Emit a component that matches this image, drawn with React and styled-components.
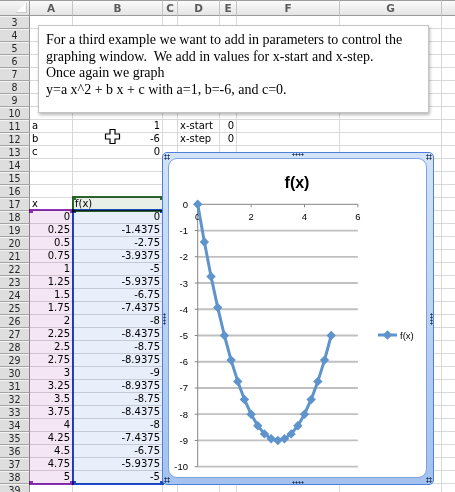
import React from 'react';
import styled, { createGlobalStyle } from 'styled-components';

const GlobalStyle = createGlobalStyle`
  html, body {
    margin: 0;
    padding: 0;
    background: #fff;
    overflow: hidden;
  }
`;

const COLS = ['A', 'B', 'C', 'D', 'E', 'F', 'G', 'H'];
const FIRST_ROW = 3;
const LAST_ROW = 39;

const fmt = (n) => String(Object.is(n, -0) ? 0 : n);
const f = (x) => x * x - 6 * x;
const xs = Array.from({ length: 21 }, (_, i) => i * 0.25);

const cells = {
  11: { A: ['a', 'left'], B: ['1', 'right'], D: ['x-start', 'left'], E: ['0', 'right'] },
  12: { A: ['b', 'left'], B: ['-6', 'right'], D: ['x-step', 'left'], E: ['0', 'right'] },
  13: { A: ['c', 'left'], B: ['0', 'right'] },
  17: { A: ['x', 'left'], B: ['f(x)', 'left'] },
};
xs.forEach((x, i) => {
  cells[18 + i] = { A: [fmt(x), 'right'], B: [fmt(f(x)), 'right'] };
});

const Window = styled.div`
  position: relative;
  width: 455px;
  height: 492px;
  overflow: hidden;
  background: #fff;
  font-family: "DejaVu Sans", Verdana, sans-serif;
`;

const Sheet = styled.div`
  position: relative;
  display: grid;
  grid-template-columns: 30px 43px 90px 15px 42px 17px 103px 102px 102px;
  grid-template-rows: 16px;
  grid-auto-rows: 13px;
`;

const Corner = styled.div`
  position: relative;
  box-sizing: border-box;
  background: linear-gradient(#f7f7f7, #e2e2e2);
  border-top: 1px solid #9c9c9c;
  border-right: 1px solid #9a9a9a;
  border-bottom: 1px solid #9a9a9a;

  &::after {
    content: '';
    position: absolute;
    right: 2px;
    bottom: 2px;
    width: 10px;
    height: 9px;
    background: linear-gradient(to bottom right, transparent 50%, #fbfbfb 50%);
    border-right: 1px solid #c9c9c9;
    border-bottom: 1px solid #c9c9c9;
  }
`;

const ColHeader = styled.div`
  box-sizing: border-box;
  background: linear-gradient(#fbfbfb, #e4e4e4);
  border-top: 1px solid #9c9c9c;
  border-right: 1px solid #c4c4c4;
  border-bottom: 1px solid #9a9a9a;
  font-size: 10.5px;
  font-weight: bold;
  line-height: 14px;
  color: #5c5c5c;
  text-align: center;
`;

const RowHeader = styled.div`
  box-sizing: border-box;
  background: #dedede;
  box-shadow: inset 0 1px 0 #f3f3f3;
  border-right: 1px solid #8f8f8f;
  border-bottom: 1px solid #a4a4a4;
  font-family: "DejaVu Sans Condensed", "DejaVu Sans", sans-serif;
  font-size: 10.5px;
  line-height: 12px;
  color: #262626;
  text-align: center;
`;

const Cell = styled.div`
  box-sizing: border-box;
  border-right: 1px solid #d9d9d9;
  border-bottom: 1px solid #d9d9d9;
  padding: 0 2px;
  font-size: 10px;
  line-height: 12px;
  color: #000;
  text-align: ${(p) => p.$align};
  white-space: nowrap;
`;

const Range = styled.div`
  position: absolute;
  grid-column: ${(p) => p.$col};
  grid-row: ${(p) => p.$rows};
  top: -2px;
  left: -1px;
  right: -1px;
  bottom: -1px;
  border: 2px solid ${(p) => p.$line};
  ${(p) => p.$open && 'border-left-color: transparent; border-right-color: transparent;'}
  background: ${(p) => p.$fill};
  mix-blend-mode: multiply;
  pointer-events: none;
`;

const Handle = styled.span`
  position: absolute;
  width: 4px;
  height: 4px;
  background: ${(p) => p.$color};
  ${(p) => (p.$v === 'top' ? 'top: -2px;' : 'bottom: -2px;')}
  ${(p) => (p.$h === 'left' ? 'left: -2px;' : 'right: -2px;')}
`;

const TextBox = styled.div`
  position: absolute;
  left: 38px;
  top: 25px;
  width: 391px;
  height: 88px;
  box-sizing: border-box;
  background: #fff;
  border: 1px solid #c4c4c4;
  box-shadow: 1px 2px 3px rgba(0, 0, 0, 0.28);
  padding: 6px 7px 5px;
  font-family: "Liberation Serif", "Times New Roman", serif;
  font-size: 14px;
  line-height: 16.6px;
  color: #000;
`;

const TextLine = styled.div`
  white-space: pre;
`;

const Cursor = styled.svg`
  position: absolute;
  left: 104px;
  top: 128px;
`;

const ChartFrame = styled.div`
  position: absolute;
  left: 162px;
  top: 152px;
  width: 272px;
  height: 333px;
  box-sizing: border-box;
  border: 1px solid #4f7fdc;
  border-radius: 5px;
  background: linear-gradient(#d3e3f8, #a3c2ed);
  padding: 5px 6px 6px 5px;
`;

const ChartArea = styled.div`
  width: 100%;
  height: 100%;
  box-sizing: border-box;
  background: #fff;
  border: 1px solid #7ea3e3;
  border-radius: 9px;
  overflow: hidden;
`;

const Grip = styled.span`
  position: absolute;
  width: ${(p) => p.$w}px;
  height: ${(p) => p.$h}px;
  background-image: radial-gradient(circle, #24375e 0.9px, transparent 1.2px);
  background-size: 3px 3px;
  ${(p) => p.$pos}
`;

const ChartSvg = styled.svg`
  display: block;
  font-family: "Liberation Sans", Arial, sans-serif;
`;

const SERIES = '#5f93cc';
const X0 = 28.7;
const Y0 = 45.3;
const SX = 26.7;
const SY = 26.24;
const px = (x) => X0 + x * SX;
const py = (y) => Y0 - y * SY;

const Diamond = ({ x, y, r = 4.7 }) => (
  <polygon points={`${x},${y - r} ${x + r},${y} ${x},${y + r} ${x - r},${y}`} fill={SERIES} />
);

const Chart = () => {
  const pts = xs.map((x) => [px(x), py(f(x))]);
  const yTicks = Array.from({ length: 11 }, (_, i) => -i);
  return (
    <ChartSvg width="257" height="318" viewBox="0 0 257 318">
      <text x="128" y="28.5" fontSize="16" fontWeight="bold" textAnchor="middle">f(x)</text>
      {yTicks.slice(1).map((v) => (
        <line key={v} x1={px(0)} x2={px(6)} y1={py(v)} y2={py(v)} stroke="#c0c0c0" strokeWidth="1.8" />
      ))}
      {yTicks.map((v) => (
        <line key={`t${v}`} x1={px(0) - 3} x2={px(0)} y1={py(v)} y2={py(v)} stroke="#868686" strokeWidth="1" />
      ))}
      <line x1={px(0)} x2={px(0)} y1={py(0)} y2={py(-10)} stroke="#868686" strokeWidth="1" />
      <line x1={px(0)} x2={px(6)} y1={py(0)} y2={py(0)} stroke="#868686" strokeWidth="1" />
      {[2, 4, 6].map((v) => (
        <line key={`x${v}`} x1={px(v)} x2={px(v)} y1={py(0)} y2={py(0) + 3} stroke="#868686" strokeWidth="1" />
      ))}
      {yTicks.map((v) => (
        <text key={`l${v}`} x="19" y={py(v) + 3.5} fontSize="9.5" textAnchor="end">{v}</text>
      ))}
      {[0, 2, 4, 6].map((v) => (
        <text key={`xl${v}`} x={px(v)} y="61" fontSize="9.5" textAnchor="middle">{v}</text>
      ))}
      <polyline points={pts.map((p) => p.join(',')).join(' ')} fill="none" stroke={SERIES} strokeWidth="3" strokeLinejoin="round" />
      {pts.map(([x, y], i) => <Diamond key={i} x={x} y={y} />)}
      <line x1="209" x2="228" y1="176" y2="176" stroke={SERIES} strokeWidth="3" />
      <Diamond x={218.5} y={176} />
      <text x="231" y="179.5" fontSize="9.5">f(x)</text>
    </ChartSvg>
  );
};

export default function App() {
  const rows = Array.from({ length: LAST_ROW - FIRST_ROW + 1 }, (_, i) => FIRST_ROW + i);
  return (
    <Window>
      <GlobalStyle />
      <Sheet>
        <Corner />
        {COLS.map((c) => (
          <ColHeader key={c}>{c}</ColHeader>
        ))}
        {rows.map((r) => (
          <React.Fragment key={r}>
            <RowHeader>{r}</RowHeader>
            {COLS.map((c) => {
              const v = cells[r] && cells[r][c];
              return (
                <Cell key={c} $align={v ? v[1] : 'left'}>
                  {v ? v[0] : ''}
                </Cell>
              );
            })}
          </React.Fragment>
        ))}
        <Range $col="2 / 3" $rows="17 / 38" $line="#9130b8" $fill="#f5e6f6" $open>
          <Handle $color="#9130b8" $v="top" $h="left" />
          <Handle $color="#9130b8" $v="top" $h="right" />
          <Handle $color="#9130b8" $v="bottom" $h="left" />
          <Handle $color="#9130b8" $v="bottom" $h="right" />
        </Range>
        <Range $col="3 / 4" $rows="17 / 38" $line="#1d4fd4" $fill="#e8eefa">
          <Handle $color="#1d4fd4" $v="top" $h="left" />
          <Handle $color="#1d4fd4" $v="top" $h="right" />
          <Handle $color="#1d4fd4" $v="bottom" $h="left" />
          <Handle $color="#1d4fd4" $v="bottom" $h="right" />
        </Range>
        <Range $col="3 / 4" $rows="16 / 17" $line="#2f6b2f" $fill="#e7efe6">
          <Handle $color="#2f6b2f" $v="top" $h="left" />
          <Handle $color="#2f6b2f" $v="top" $h="right" />
        </Range>
      </Sheet>

      <TextBox>
        <TextLine>For a third example we want to add in parameters to control the</TextLine>
        <TextLine>graphing window.  We add in values for x-start and x-step.</TextLine>
        <TextLine>Once again we graph</TextLine>
        <TextLine>y=a x^2 + b x + c with a=1, b=-6, and c=0.</TextLine>
      </TextBox>

      <Cursor width="17" height="17" viewBox="0 0 17 17">
        <path
          d="M6 1.5h5v4.5h4.5v5H11v4.5H6V11H1.5V6H6z"
          fill="#fff"
          stroke="#000"
          strokeWidth="1.2"
          strokeLinejoin="miter"
        />
      </Cursor>

      <ChartFrame>
        <ChartArea>
          <Chart />
        </ChartArea>
        <Grip $w={6} $h={6} $pos="left: 1px; top: 1px;" />
        <Grip $w={6} $h={6} $pos="right: 1px; top: 1px;" />
        <Grip $w={6} $h={6} $pos="left: 1px; bottom: 1px;" />
        <Grip $w={6} $h={6} $pos="right: 1px; bottom: 1px;" />
        <Grip $w={12} $h={3} $pos="left: 129px; top: 0;" />
        <Grip $w={12} $h={3} $pos="left: 129px; bottom: 0;" />
        <Grip $w={3} $h={12} $pos="left: 0; top: 160px;" />
        <Grip $w={3} $h={12} $pos="right: 0; top: 160px;" />
      </ChartFrame>
    </Window>
  );
}
